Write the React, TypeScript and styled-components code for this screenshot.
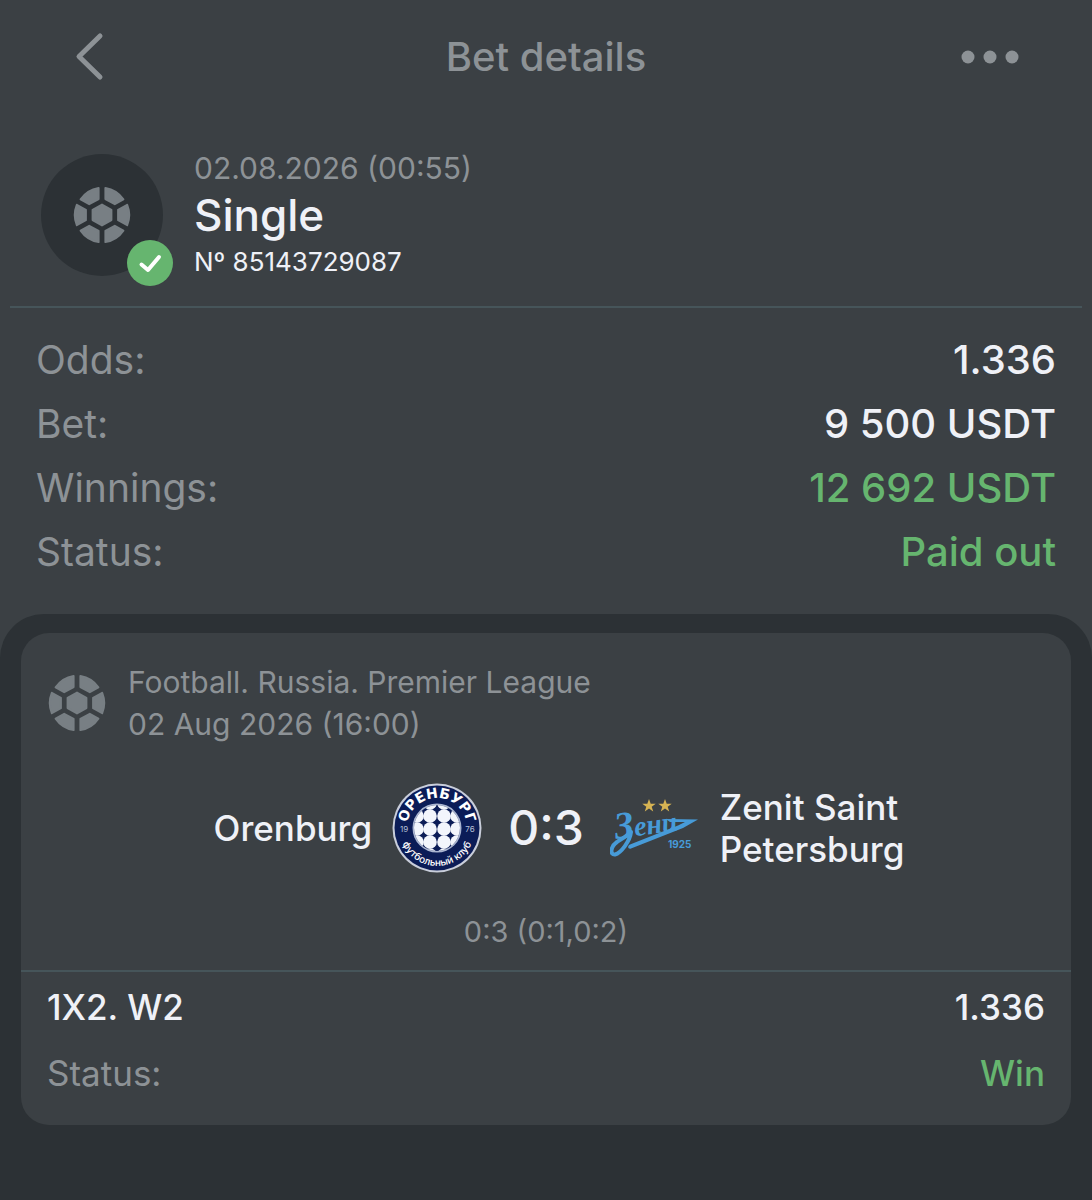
import React from "react";
import styled, { createGlobalStyle } from "styled-components";

const color = {
  surface: "#3b4044",
  deep: "#2c3135",
  line: "#46555a",
  muted: "#8d9296",
  icon: "#787f84",
  text: "#eff1f7",
  green: "#66b56f",
  navy: "#0b1c57",
  sky: "#479bd8",
  gold: "#d6b353",
};

const GlobalStyle = createGlobalStyle`
  * { box-sizing: border-box; }
  body {
    margin: 0;
    background: ${color.deep};
    color: ${color.text};
    font-family: Inter, "Liberation Sans", sans-serif;
  }
  h1, h2, p, dl, dd, dt { margin: 0; font-weight: 400; }
`;

const Page = styled.main`
  display: flex;
  flex-direction: column;
  min-height: 100vh;
  background: ${color.surface};
`;

const TopBar = styled.header`
  display: grid;
  grid-template-columns: 72px 1fr 72px;
  align-items: center;
  height: 113px;
  padding: 0 60px;
`;

const Title = styled.h1`
  font-size: 40px;
  line-height: 48px;
  font-weight: 500;
  color: ${color.muted};
  text-align: center;
`;

const IconButton = styled.button`
  display: flex;
  align-items: center;
  justify-content: center;
  width: 60px;
  height: 60px;
  padding: 0;
  border: 0;
  background: none;
  color: ${color.muted};
  cursor: pointer;
`;

const Summary = styled.section`
  display: flex;
  align-items: center;
  gap: 31px;
  margin: 0 10px;
  padding: 34px 31px 23px;
  border-bottom: 2px solid ${color.line};
`;

const Avatar = styled.div`
  position: relative;
  display: grid;
  place-items: center;
  flex: none;
  width: 122px;
  height: 122px;
  border-radius: 50%;
  background: ${color.deep};
`;

const CheckBadge = styled.span`
  position: absolute;
  right: -10px;
  bottom: -10px;
  display: flex;
  width: 46px;
  height: 46px;
  border-radius: 50%;
  background: ${color.green};
`;

const SummaryText = styled.div`
  display: flex;
  flex-direction: column;
`;

const Stamp = styled.p`
  font-size: 30px;
  line-height: 42px;
  color: ${color.muted};
`;

const BetType = styled.h2`
  font-size: 44px;
  line-height: 52px;
  font-weight: 500;
`;

const BetNumber = styled.p`
  font-size: 26px;
  line-height: 42px;
`;

const Facts = styled.dl`
  padding: 20px 36px 30px;
`;

const Fact = styled.div`
  display: flex;
  align-items: center;
  justify-content: space-between;
  height: 64px;
  font-size: 40px;
  line-height: 48px;
`;

const Term = styled.dt`
  color: ${color.muted};
`;

const FactTerm = styled(Term)`
  font-size: 39px;
`;

const Value = styled.dd<{ $positive?: boolean }>`
  font-weight: 500;
  color: ${(p) => (p.$positive ? color.green : color.text)};
`;

const Events = styled.section`
  flex: 1;
  padding: 19px 21px 75px;
  border-radius: 44px 44px 0 0;
  background: ${color.deep};
`;

const Card = styled.article`
  border-radius: 28px;
  background: ${color.surface};
`;

const League = styled.header`
  display: flex;
  align-items: center;
  gap: 22px;
  padding: 28px 27px 0;
`;

const LeagueText = styled.p`
  font-size: 30px;
  line-height: 42px;
  color: ${color.muted};
`;

const Match = styled.div`
  display: grid;
  grid-template-columns: 1fr auto 1fr;
  align-items: center;
  gap: 26px;
  padding: 38px 27px 0;
`;

const Team = styled.div<{ $home?: boolean }>`
  display: flex;
  align-items: center;
  justify-content: ${(p) => (p.$home ? "flex-end" : "flex-start")};
  gap: 20px;
`;

const TeamName = styled.span`
  max-width: 200px;
  font-size: 35px;
  line-height: 42px;
  font-weight: 500;
`;

const Score = styled.strong`
  font-size: 48px;
  line-height: 58px;
  font-weight: 500;
`;

const Periods = styled.p`
  padding: 38px 27px 17px;
  border-bottom: 2px solid ${color.line};
  font-size: 29px;
  line-height: 42px;
  text-align: center;
  color: ${color.muted};
`;

const Outcome = styled.dl`
  padding: 2px 26px 19px;
`;

const OutcomeRow = styled.div`
  display: flex;
  align-items: center;
  justify-content: space-between;
  height: 66px;
  font-size: 35px;
  line-height: 42px;
`;

const Market = styled.dt`
  font-weight: 500;
`;

const SportIcon = () => (
  <svg width="58" height="58" viewBox="0 0 58 58" aria-hidden="true" fill={color.icon}>
    <g stroke={color.icon} strokeWidth="2" strokeLinejoin="round">
      <path d="M29 18.6 38.4 23.9V34.1L29 39.4 19.6 34.1V23.9Z" />
      <path d="M25.6 2V13L16.2 18.2 7.6 13.4A27.2 27.2 0 0 1 25.6 2Z" />
      <path d="M32.4 2V13L41.8 18.2 50.4 13.4A27.2 27.2 0 0 0 32.4 2Z" />
      <path d="M25.6 56V45L16.2 39.8 7.6 44.6A27.2 27.2 0 0 0 25.6 56Z" />
      <path d="M32.4 56V45L41.8 39.8 50.4 44.6A27.2 27.2 0 0 1 32.4 56Z" />
      <path d="M3.8 18.8 12.9 23.8V34.2L3.8 39.2A27.2 27.2 0 0 1 3.8 18.8Z" />
      <path d="M54.2 18.8 45.1 23.8V34.2L54.2 39.2A27.2 27.2 0 0 0 54.2 18.8Z" />
    </g>
  </svg>
);

const OrenburgCrest = () => (
  <svg width="90" height="90" viewBox="0 0 90 90" role="img" aria-label="Orenburg">
    <defs>
      <path id="crest-top" d="M15 45A30 30 0 0 1 75 45" />
      <path id="crest-bottom" d="M7 45A38 38 0 0 0 83 45" />
      <clipPath id="crest-ball">
        <circle cx="45" cy="45" r="23" />
      </clipPath>
    </defs>
    <circle cx="45" cy="45" r="44.5" fill="#c9cedb" />
    <circle cx="45" cy="45" r="42.5" fill={color.navy} />
    <circle cx="45" cy="45" r="24.5" fill="#a9b4d0" />
    <circle cx="45" cy="45" r="23" fill={color.navy} />
    <g clipPath="url(#crest-ball)" fill="#f2f5fc">
      {[20, 33, 46, 59, 72].map((y) =>
        [25, 38, 52, 65].map((x) => <circle key={`${x}-${y}`} cx={x} cy={y} r="6.8" />),
      )}
    </g>
    <g fill="#fff" textAnchor="middle" fontFamily="Inter, sans-serif">
      <text fontSize="14" fontWeight="700" fontFamily="DejaVu Sans, sans-serif">
        <textPath href="#crest-top" startOffset="50%">ОРЕНБУРГ</textPath>
      </text>
      <text fontSize="10" fontWeight="500">
        <textPath href="#crest-bottom" startOffset="50%">футбольный клуб</textPath>
      </text>
      <text x="12" y="49" fontSize="8" fill="#b8c0d8">19</text>
      <text x="78" y="49" fontSize="8" fill="#b8c0d8">76</text>
    </g>
  </svg>
);

const ZenitCrest = () => (
  <svg width="90" height="90" viewBox="0 0 90 90" role="img" aria-label="Zenit Saint Petersburg">
    <g fill={color.gold}>
      <path d="M39 16 40.7 20.7H45.7L41.7 23.7 43.2 28.5 39 25.6 34.8 28.5 36.3 23.7 32.3 20.7H37.3Z" />
      <path d="M55 16 56.7 20.7H61.7L57.7 23.7 59.2 28.5 55 25.6 50.8 28.5 52.3 23.7 48.3 20.7H53.3Z" />
    </g>
    <g fill={color.sky}>
      <path d="M56 36 88 36.5 73 45 21 65.5C18 66.5 17 63 20 61.5L68 42.5 75 39 60 39Z" />
      <path
        d="M21 49C20 58 11 70 5 71.5C0 72 0 64 7 59C11 56 16 54 20 50"
        fill="none"
        stroke={color.sky}
        strokeWidth="4"
        strokeLinecap="round"
      />
      <text
        x="6"
        y="56"
        fontSize="28"
        fontWeight="700"
        fontStyle="italic"
        fontFamily="Liberation Serif, serif"
        transform="rotate(-8 6 56)"
      >
        <tspan fontSize="38">З</tspan>
        <tspan>ени</tspan>
      </text>
      <text x="58" y="65" fontSize="10" fontWeight="700" fontFamily="Inter, sans-serif">1925</text>
    </g>
  </svg>
);

const facts = [
  { term: "Odds:", value: "1.336" },
  { term: "Bet:", value: "9 500 USDT" },
  { term: "Winnings:", value: "12 692 USDT", positive: true },
  { term: "Status:", value: "Paid out", positive: true },
];

export default function App() {
  return (
    <>
      <GlobalStyle />
      <Page>
        <TopBar>
          <IconButton type="button" aria-label="Back">
            <svg width="60" height="60" viewBox="0 0 60 60" fill="none" stroke="currentColor" strokeWidth="5" strokeLinecap="round" strokeLinejoin="round">
              <path d="M40 9 19 29.5 40 50" />
            </svg>
          </IconButton>
          <Title>Bet details</Title>
          <IconButton type="button" aria-label="More options">
            <svg width="60" height="14" viewBox="0 0 60 14" fill="currentColor">
              <circle cx="8" cy="7" r="6.5" />
              <circle cx="30" cy="7" r="6.5" />
              <circle cx="52" cy="7" r="6.5" />
            </svg>
          </IconButton>
        </TopBar>

        <Summary>
          <Avatar>
            <SportIcon />
            <CheckBadge>
              <svg width="46" height="46" viewBox="0 0 46 46" fill="none" stroke="#fff" strokeWidth="4" strokeLinecap="round" strokeLinejoin="round" role="img" aria-label="Won">
                <path d="M14.5 24.5 21 30 32 17" />
              </svg>
            </CheckBadge>
          </Avatar>
          <SummaryText>
            <Stamp>02.08.2026 (00:55)</Stamp>
            <BetType>Single</BetType>
            <BetNumber>Nº 85143729087</BetNumber>
          </SummaryText>
        </Summary>

        <Facts>
          {facts.map((f) => (
            <Fact key={f.term}>
              <FactTerm>{f.term}</FactTerm>
              <Value $positive={f.positive}>{f.value}</Value>
            </Fact>
          ))}
        </Facts>

        <Events>
          <Card>
            <League>
              <SportIcon />
              <LeagueText>
                Football. Russia. Premier League
                <br />
                02 Aug 2026 (16:00)
              </LeagueText>
            </League>
            <Match>
              <Team $home>
                <TeamName>Orenburg</TeamName>
                <OrenburgCrest />
              </Team>
              <Score>0:3</Score>
              <Team>
                <ZenitCrest />
                <TeamName>Zenit Saint Petersburg</TeamName>
              </Team>
            </Match>
            <Periods>0:3 (0:1,0:2)</Periods>
            <Outcome>
              <OutcomeRow>
                <Market>1X2. W2</Market>
                <Value>1.336</Value>
              </OutcomeRow>
              <OutcomeRow>
                <Term>Status:</Term>
                <Value $positive>Win</Value>
              </OutcomeRow>
            </Outcome>
          </Card>
        </Events>
      </Page>
    </>
  );
}
